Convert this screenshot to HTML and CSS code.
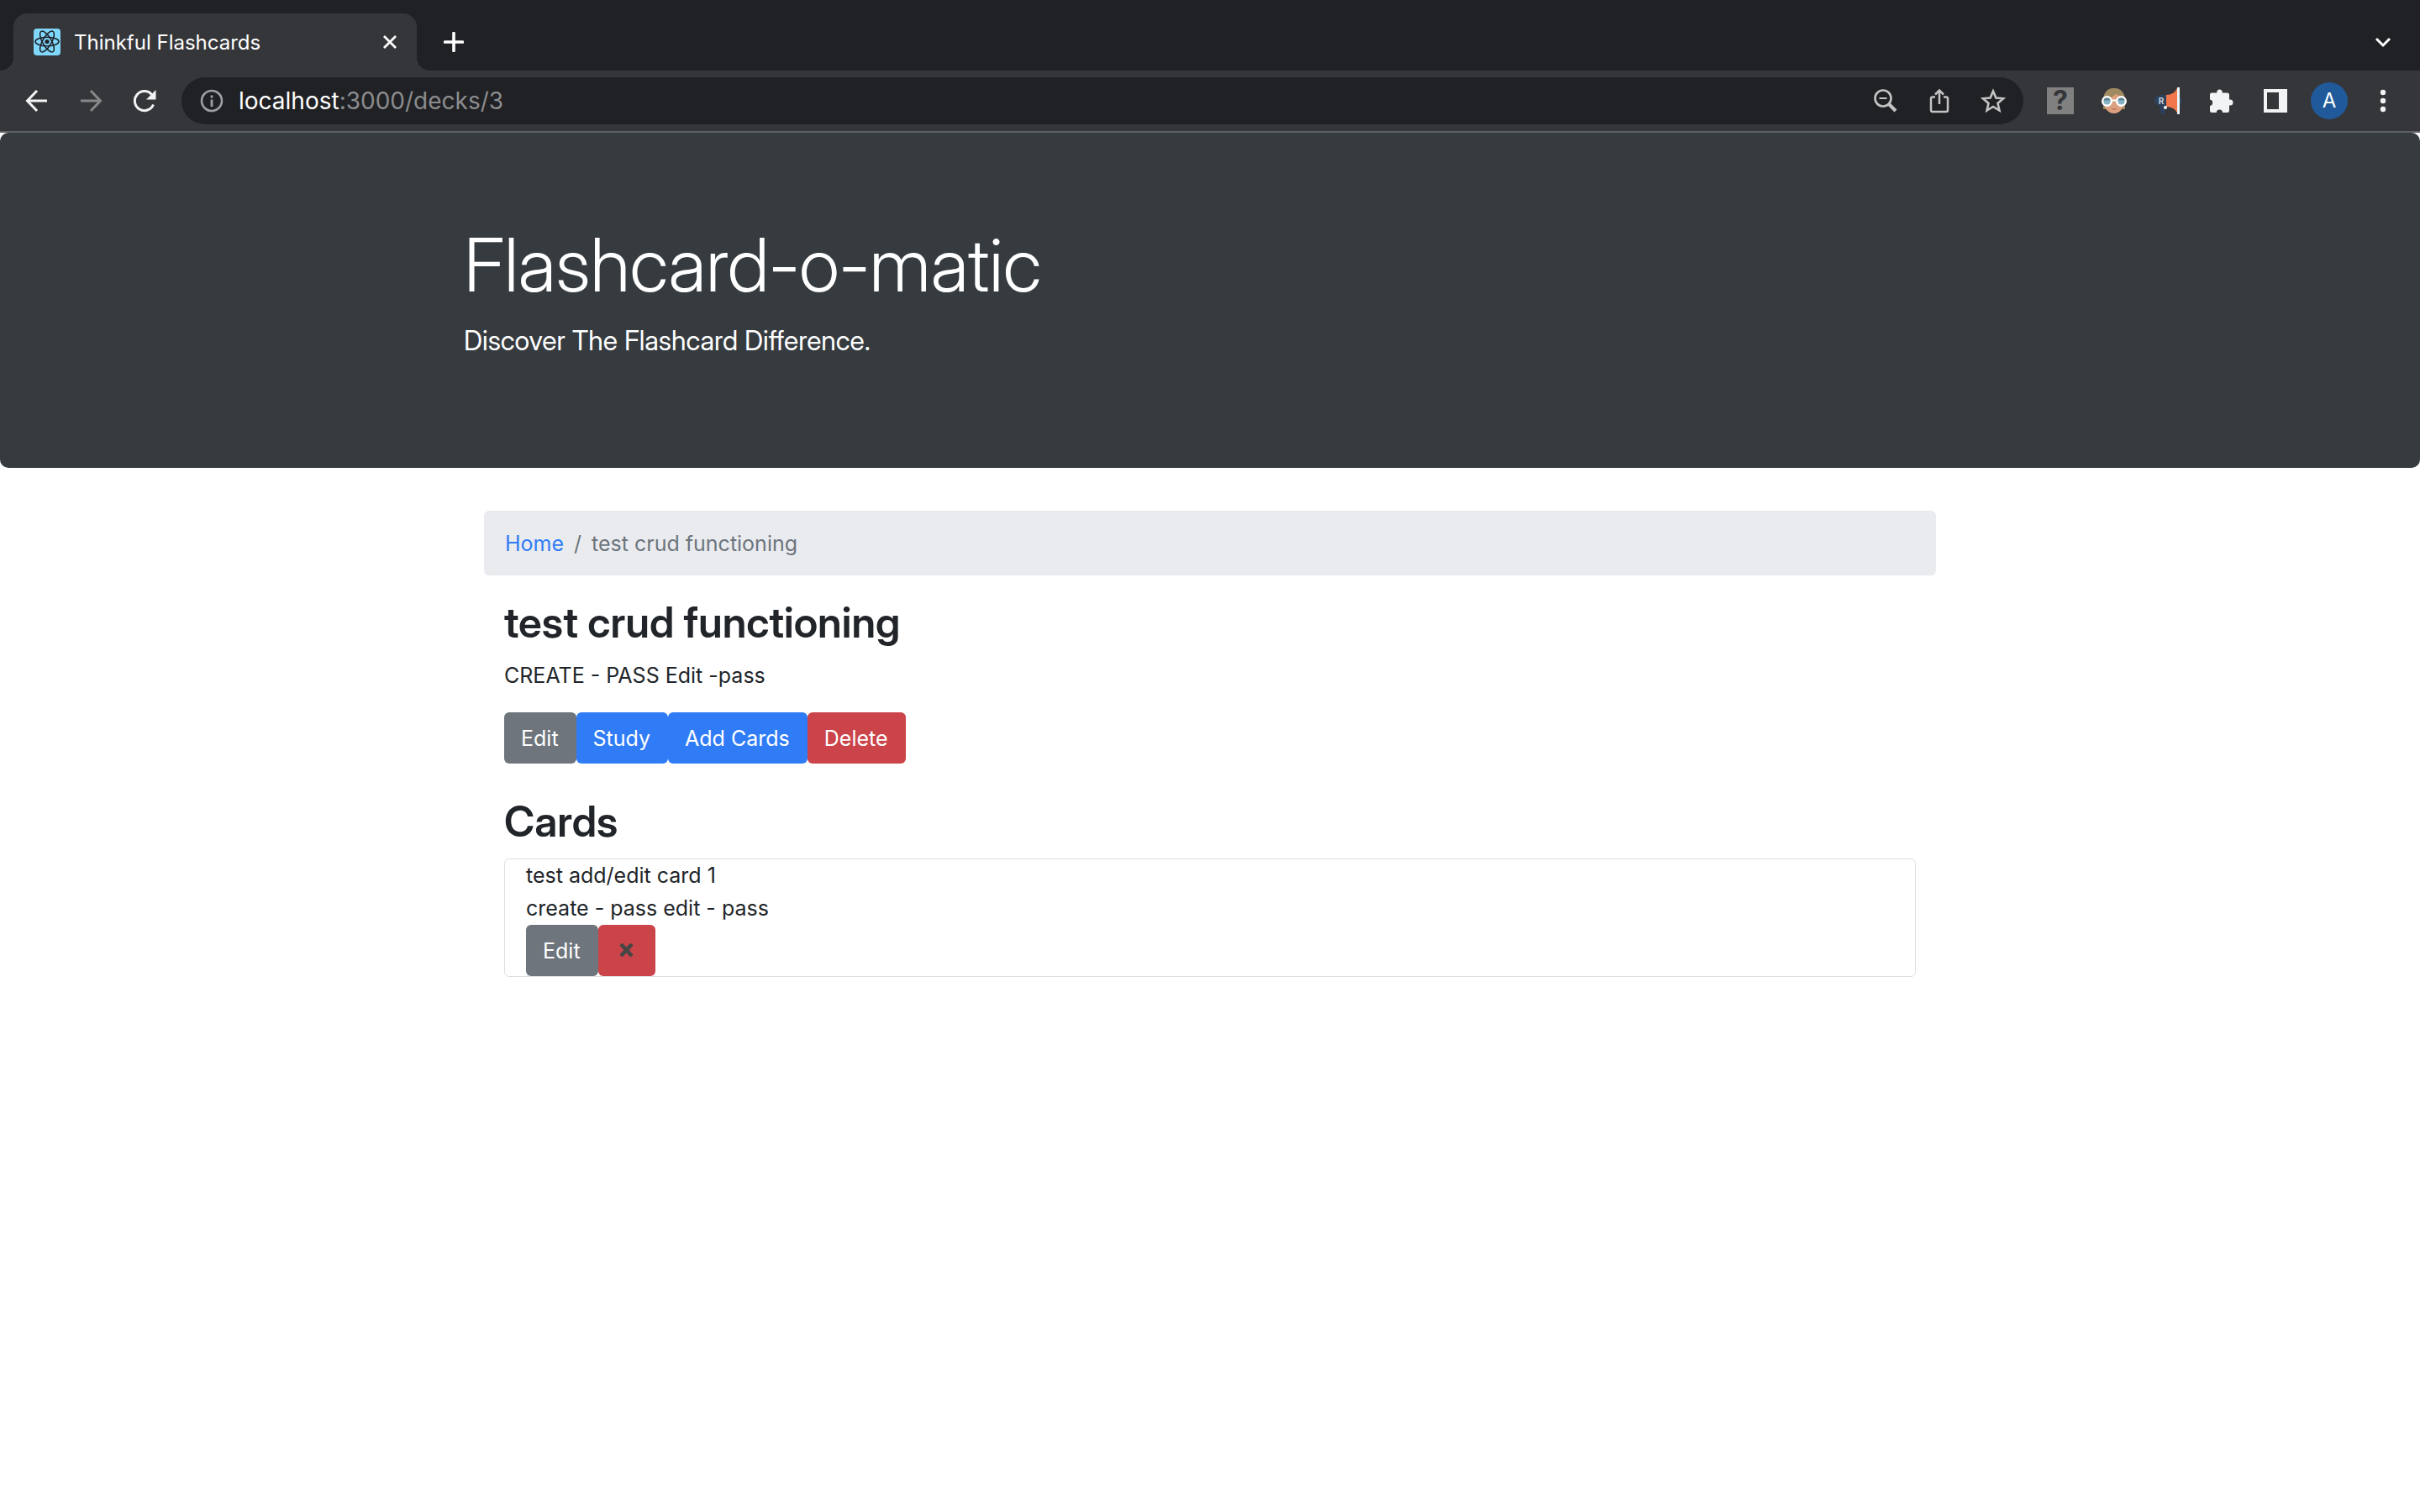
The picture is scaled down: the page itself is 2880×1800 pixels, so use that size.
FILE: index.html
```html
<!DOCTYPE html>
<html lang="en">
<head>
<meta charset="utf-8">
<title>Thinkful Flashcards</title>
<meta name="viewport" content="width=device-width, initial-scale=1">
<link rel="stylesheet" href="styles.css">
</head>
<body>
<div class="browser">
  <div class="tabstrip">
    <div class="tab">
      <svg class="favicon" viewBox="0 0 32 32" aria-hidden="true">
        <rect width="32" height="32" rx="4" fill="#7fd8fb"/>
        <g fill="none" stroke="#20232a" stroke-width="1.6">
          <ellipse cx="16" cy="15.500" rx="14" ry="5.300"/>
          <ellipse cx="16" cy="15.500" rx="14" ry="5.300" transform="rotate(60 16 15.500)"/>
          <ellipse cx="16" cy="15.500" rx="14" ry="5.300" transform="rotate(120 16 15.500)"/>
        </g>
        <circle cx="16" cy="15.500" r="2.600" fill="#20232a"/>
      </svg>
      <span class="tab-title">Thinkful Flashcards</span>
      <button class="tab-close" aria-label="Close tab">
        <svg width="16" height="16" viewBox="0 0 16 16"><path d="M1 1l14 14M15 1L1 15" stroke="#fff" stroke-width="2.800" fill="none"/></svg>
      </button>
    </div>
    <button class="new-tab" aria-label="New tab">
      <svg width="24" height="24" viewBox="0 0 24 24"><path d="M12 1.500v21M1.500 12h21" stroke="#fff" stroke-width="3.600" stroke-linecap="round"/></svg>
    </button>
    <button class="tab-search" aria-label="Search tabs">
      <svg width="20" height="14" viewBox="0 0 20 14"><path d="M2 3l8 8 8-8" fill="none" stroke="#fff" stroke-width="3"/></svg>
    </button>
  </div>
  <div class="toolbar">
    <button class="tool" aria-label="Back">
      <svg width="28" height="28" viewBox="0 0 28 28"><path d="M26 14H3M14 2L2.500 14 14 26" fill="none" stroke="#f1f3f4" stroke-width="3"/></svg>
    </button>
    <button class="tool" aria-label="Forward">
      <svg width="28" height="28" viewBox="0 0 28 28"><path d="M2 14h23M14 2l11.500 12L14 26" fill="none" stroke="#86888a" stroke-width="3"/></svg>
    </button>
    <button class="tool" aria-label="Reload">
      <svg width="28" height="28" viewBox="0 0 28 28"><path d="M24.500 18.500a11.500 11.500 0 1 1-2-12" fill="none" stroke="#f1f3f4" stroke-width="3"/><path d="M27.500 1v11.500H16z" fill="#f1f3f4"/></svg>
    </button>
    <div class="omnibox">
      <button class="tool" aria-label="Site information">
        <svg width="28" height="28" viewBox="0 0 28 28"><circle cx="14" cy="14" r="12" fill="none" stroke="#9aa0a6" stroke-width="2.600"/><path d="M14 12.500v8.500M14 7.500v3" stroke="#9aa0a6" stroke-width="2.800"/></svg>
      </button>
      <span class="url"><b>localhost</b>:3000/decks/3</span>
      <button class="tool" aria-label="Zoom">
        <svg width="28" height="28" viewBox="0 0 28 28"><circle cx="11" cy="11" r="9.500" fill="none" stroke="#c4c4c4" stroke-width="2.600"/><path d="M6.500 11h9" stroke="#c4c4c4" stroke-width="2"/><path d="M18 18l8 8" stroke="#c4c4c4" stroke-width="4"/></svg>
      </button>
      <button class="tool" aria-label="Share this page">
        <svg width="28" height="30" viewBox="0 0 28 30"><path d="M9 10.500H6q-2 0-2 2v13.500q0 2 2 2h16q2 0 2-2V12.500q0-2-2-2h-3M14 19V3M9 7.500l5-5 5 5" fill="none" stroke="#c4c4c4" stroke-width="2.500"/></svg>
      </button>
      <button class="tool" aria-label="Bookmark this tab">
        <svg width="30" height="30" viewBox="0 0 30 30"><path d="M15 3.500l3.400 8 8.600.8-6.500 5.700 2 8.500-7.500-4.500-7.500 4.500 2-8.500L3 12.300l8.600-.8z" fill="none" stroke="#c4c4c4" stroke-width="2.600"/></svg>
      </button>
    </div>
    <button class="tool ext-unknown" aria-label="Extension"><span>?</span></button>
    <button class="tool" aria-label="Glasses extension">
      <svg width="32" height="32" viewBox="0 0 32 32"><path d="M3 26V16C3 5 9 1 16 1s13 4 13 15v10h-5V14H8v12z" fill="#a08560"/><path d="M4 15q7-2 12-8 6 2 12 7c1 10-5 17-12 17S3 25 4 15z" fill="#dba07f"/><path d="M3 15q10-2 16-8 4 4 9 6C27 5 22 1 16 1S4 5 3 15z" fill="#a08a62"/><circle cx="7.500" cy="16.500" r="5.300" fill="#85b4c5" stroke="#fff" stroke-width="2.400"/><circle cx="24.500" cy="16.500" r="5.300" fill="#85b4c5" stroke="#fff" stroke-width="2.400"/><path d="M3.500 15.500a4.200 4.200 0 0 1 8 0zM20.500 15.500a4.200 4.200 0 0 1 8 0z" fill="#5b7f8e"/><path d="M12.500 15.500h7" stroke="#fff" stroke-width="2"/><path d="M12 25q4 1 8 0-4 3.500-8 0z" fill="#b85d4c"/></svg>
    </button>
    <button class="tool" aria-label="Megaphone extension">
      <svg width="32" height="32" viewBox="0 0 32 32"><path d="M14 9H7q-7 1-7 7 0 4 6 6l2 10h4l1-9h2z" fill="#2d415c"/><path d="M14 9q9 0 13-8v29q-4-7-13-7z" fill="#f2784b"/><path d="M28.500 0v32" stroke="#e9f4fb" stroke-width="3"/><path d="M30.500 12q3 4 0 8z" fill="#2d5580"/><text x="8" y="19.500" text-anchor="middle" font-size="10" font-weight="700" font-family="Inter,sans-serif" fill="#c9ced6">R</text><circle cx="13" cy="24" r="2" fill="#fff"/></svg>
    </button>
    <button class="tool" aria-label="Extensions">
      <svg width="30" height="30" viewBox="0 0 30 30"><path d="M3 5.500H9.300a3.300 3.300 0 1 1 6.400 0H21.500q2.500 0 2.500 2.500v5.500h1a3.500 3.500 0 0 1 0 7h-1V26.500q0 2.500-2.500 2.500H16a3.600 3.600 0 0 0-7.200 0H3.500Q1 29 1 26.500V21a3.800 3.800 0 0 0 0-7.500V7.500q0-2 2-2z" fill="#f1f3f4"/></svg>
    </button>
    <button class="tool" aria-label="Side panel">
      <svg width="28" height="28" viewBox="0 0 28 28"><path d="M0 0h28v28H0zM4 4v20h14V4z" fill="#f1f3f4" fill-rule="evenodd"/></svg>
    </button>
    <button class="tool profile" aria-label="Profile"><span>A</span></button>
    <button class="tool" aria-label="Menu">
      <svg width="8" height="28" viewBox="0 0 8 28"><g fill="#f1f3f4"><circle cx="4" cy="4" r="3.200"/><circle cx="4" cy="14" r="3.200"/><circle cx="4" cy="24" r="3.200"/></g></svg>
    </button>
  </div>
</div>

<header class="jumbotron">
  <div class="container">
    <h1 class="display">Flashcard-o-matic</h1>
    <p class="lead">Discover The Flashcard Difference.</p>
  </div>
</header>

<main class="container">
  <div class="deck">
    <nav aria-label="breadcrumb">
      <ol class="breadcrumb">
        <li><a href="#home">Home</a></li>
        <li aria-current="page">test crud functioning</li>
      </ol>
    </nav>
    <section class="section">
      <h2>test crud functioning</h2>
      <p class="description">CREATE - PASS Edit -pass</p>
      <div class="actions">
        <button class="btn btn-secondary">Edit</button>
        <button class="btn btn-primary">Study</button>
        <button class="btn btn-primary">Add Cards</button>
        <button class="btn btn-danger">Delete</button>
      </div>
    </section>
    <section class="section">
      <h2>Cards</h2>
      <article class="card">
        <p>test add/edit card 1</p>
        <p>create - pass edit - pass</p>
        <div class="actions">
          <button class="btn btn-secondary">Edit</button>
          <button class="btn btn-danger" aria-label="Delete card">
            <svg width="27" height="20" viewBox="0 0 27 20"><path d="M7 1l13 14M20 1l-13 14" stroke="#464646" stroke-width="4.600"/></svg>
          </button>
        </div>
      </article>
    </section>
  </div>
</main>
</body>
</html>
```
FILE: styles.css
```css
* { box-sizing: border-box; }

body {
  margin: 0;
  background: #fff;
  color: #212529;
  font-family: Inter, "Liberation Sans", sans-serif;
  font-size: 25px;
  line-height: 39px;
}

h1, h2, p, ol { margin: 0; padding: 0; }
button { font: inherit; border: 0; margin: 0; padding: 0; background: none; color: inherit; }
svg { display: block; flex: none; }

/* Browser window */
.browser { border-bottom: 2px solid #5f6164; background: #35363a; color: #fff; }

.tabstrip {
  display: flex;
  align-items: center;
  height: 84px;
  padding: 16px 32px 0 16px;
  background: #202124;
}

.tab {
  position: relative;
  display: flex;
  align-items: center;
  align-self: stretch;
  width: 480px;
  padding: 0 24px;
  border-radius: 16px 16px 0 0;
  background: #35363a;
}

.tab::before, .tab::after {
  content: "";
  position: absolute;
  bottom: 0;
  width: 16px;
  height: 16px;
}
.tab::before { left: -16px; background: radial-gradient(circle at 0 0, #202124 16px, #35363a 16px); }
.tab::after { right: -16px; background: radial-gradient(circle at 100% 0, #202124 16px, #35363a 16px); }

.favicon { width: 32px; height: 32px; margin-right: 16px; }
.tab-title { flex: 1; font-size: 24px; }
.new-tab { margin-left: 32px; }
.tab-search { margin-left: auto; padding: 0 2px; }

.toolbar { display: flex; align-items: center; height: 72px; padding: 0 12px; }
.tool { display: flex; align-items: center; justify-content: center; flex: none; width: 64px; height: 56px; }

.omnibox {
  display: flex;
  align-items: center;
  flex: 1;
  margin: 0 12px;
  padding: 0 4px;
  border-radius: 28px;
  background: #202124;
}
.url { flex: 1; color: #8b8c8e; font-size: 28px; }
.url b { color: #fff; font-weight: 400; }

.ext-unknown span {
  width: 32px;
  background: #808080;
  color: #35363a;
  font-size: 32px;
  font-weight: 700;
  line-height: 32px;
}
.profile span {
  width: 44px;
  border-radius: 50%;
  background: #205a9b;
  font-size: 24px;
  line-height: 44px;
}

/* Page */
.container { max-width: 1824px; margin: 0 auto; padding: 0 24px; }

.jumbotron {
  margin-bottom: 51px;
  padding: 103px 0 127px;
  border-radius: 10px;
  background: #363b3f;
  color: #fff;
}
.display, .lead, h2 { font-family: "Inter Display", Inter, "Liberation Sans", sans-serif; }
.display { margin-bottom: 13px; font-size: 88px; font-weight: 300; line-height: 108px; }
.lead { font-size: 32px; font-weight: 400; line-height: 48px; }

.deck { padding: 0 24px; }

.breadcrumb {
  display: flex;
  margin-bottom: 26px;
  padding: 20px 25px 18px;
  border-radius: 6px;
  background: #eaebef;
  color: #6c757d;
  list-style: none;
}
.breadcrumb li + li::before { content: "/"; padding: 0 12px; }
.breadcrumb a { color: #2f7cf6; text-decoration: none; }

.section { margin-bottom: 39px; padding: 0 24px; }
h2 { margin-bottom: 13px; font-size: 50px; font-weight: 600; line-height: 61px; }
.description { margin-bottom: 24px; }

.actions { display: flex; }
.btn {
  display: flex;
  align-items: center;
  height: 61px;
  padding: 2px 21px 0 20px;
  border-radius: 6px;
  color: #fff;
}
.btn-primary { background: #2f7cf6; }
.btn-secondary { background: #6e757c; }
.btn-danger { background: #cb444a; }

.card { padding: 0 25px; border: 1px solid #dfdfdf; border-radius: 6px; }
```
